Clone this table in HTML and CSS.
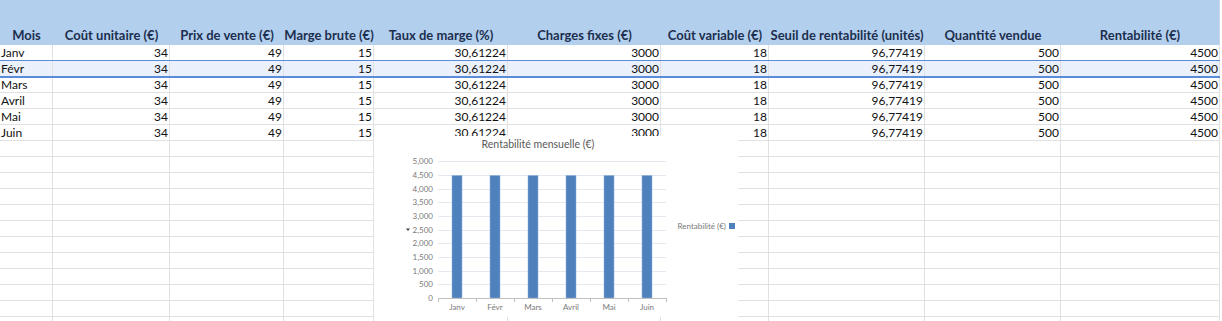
FILE: index.html
```html
<!DOCTYPE html>
<html lang="fr">
<head>
<meta charset="utf-8">
<title>Rentabilité</title>
<link rel="stylesheet" href="styles.css">
</head>
<body>
<div class="sheet">
  <div class="row head">
    <div class="c">Mois</div><div class="c">Coût unitaire (€)</div><div class="c">Prix de vente (€)</div><div class="c">Marge brute (€)</div><div class="c">Taux de marge (%)</div><div class="c">Charges fixes (€)</div><div class="c">Coût variable (€)</div><div class="c">Seuil de rentabilité (unités)</div><div class="c">Quantité vendue</div><div class="c">Rentabilité (€)</div>
  </div>
  <div class="row"><div class="c l">Janv</div><div class="c">34</div><div class="c">49</div><div class="c">15</div><div class="c">30,61224</div><div class="c">3000</div><div class="c">18</div><div class="c">96,77419</div><div class="c">500</div><div class="c">4500</div></div>
  <div class="row sel"><div class="c l">Févr</div><div class="c">34</div><div class="c">49</div><div class="c">15</div><div class="c">30,61224</div><div class="c">3000</div><div class="c">18</div><div class="c">96,77419</div><div class="c">500</div><div class="c">4500</div></div>
  <div class="row"><div class="c l">Mars</div><div class="c">34</div><div class="c">49</div><div class="c">15</div><div class="c">30,61224</div><div class="c">3000</div><div class="c">18</div><div class="c">96,77419</div><div class="c">500</div><div class="c">4500</div></div>
  <div class="row"><div class="c l">Avril</div><div class="c">34</div><div class="c">49</div><div class="c">15</div><div class="c">30,61224</div><div class="c">3000</div><div class="c">18</div><div class="c">96,77419</div><div class="c">500</div><div class="c">4500</div></div>
  <div class="row"><div class="c l">Mai</div><div class="c">34</div><div class="c">49</div><div class="c">15</div><div class="c">30,61224</div><div class="c">3000</div><div class="c">18</div><div class="c">96,77419</div><div class="c">500</div><div class="c">4500</div></div>
  <div class="row"><div class="c l">Juin</div><div class="c">34</div><div class="c">49</div><div class="c">15</div><div class="c">30,61224</div><div class="c">3000</div><div class="c">18</div><div class="c">96,77419</div><div class="c">500</div><div class="c">4500</div></div>
  <div class="row"><div class="c"></div><div class="c"></div><div class="c"></div><div class="c"></div><div class="c"></div><div class="c"></div><div class="c"></div><div class="c"></div><div class="c"></div><div class="c"></div></div>
  <div class="row"><div class="c"></div><div class="c"></div><div class="c"></div><div class="c"></div><div class="c"></div><div class="c"></div><div class="c"></div><div class="c"></div><div class="c"></div><div class="c"></div></div>
  <div class="row"><div class="c"></div><div class="c"></div><div class="c"></div><div class="c"></div><div class="c"></div><div class="c"></div><div class="c"></div><div class="c"></div><div class="c"></div><div class="c"></div></div>
  <div class="row"><div class="c"></div><div class="c"></div><div class="c"></div><div class="c"></div><div class="c"></div><div class="c"></div><div class="c"></div><div class="c"></div><div class="c"></div><div class="c"></div></div>
  <div class="row"><div class="c"></div><div class="c"></div><div class="c"></div><div class="c"></div><div class="c"></div><div class="c"></div><div class="c"></div><div class="c"></div><div class="c"></div><div class="c"></div></div>
  <div class="row"><div class="c"></div><div class="c"></div><div class="c"></div><div class="c"></div><div class="c"></div><div class="c"></div><div class="c"></div><div class="c"></div><div class="c"></div><div class="c"></div></div>
  <div class="row"><div class="c"></div><div class="c"></div><div class="c"></div><div class="c"></div><div class="c"></div><div class="c"></div><div class="c"></div><div class="c"></div><div class="c"></div><div class="c"></div></div>
  <div class="row"><div class="c"></div><div class="c"></div><div class="c"></div><div class="c"></div><div class="c"></div><div class="c"></div><div class="c"></div><div class="c"></div><div class="c"></div><div class="c"></div></div>
  <div class="row"><div class="c"></div><div class="c"></div><div class="c"></div><div class="c"></div><div class="c"></div><div class="c"></div><div class="c"></div><div class="c"></div><div class="c"></div><div class="c"></div></div>
  <div class="row"><div class="c"></div><div class="c"></div><div class="c"></div><div class="c"></div><div class="c"></div><div class="c"></div><div class="c"></div><div class="c"></div><div class="c"></div><div class="c"></div></div>
  <div class="row"><div class="c"></div><div class="c"></div><div class="c"></div><div class="c"></div><div class="c"></div><div class="c"></div><div class="c"></div><div class="c"></div><div class="c"></div><div class="c"></div></div>
  <div class="row"><div class="c"></div><div class="c"></div><div class="c"></div><div class="c"></div><div class="c"></div><div class="c"></div><div class="c"></div><div class="c"></div><div class="c"></div><div class="c"></div></div>

  <div class="chart">
    <svg width="364" height="181" viewBox="0 0 364 181">
      <text class="title" x="164" y="12" text-anchor="middle">Rentabilité mensuelle (€)</text>
      <g class="grid">
        <line x1="64" x2="292" y1="25.5" y2="25.5"/>
        <line x1="64" x2="292" y1="39.5" y2="39.5"/>
        <line x1="64" x2="292" y1="53.5" y2="53.5"/>
        <line x1="64" x2="292" y1="66.5" y2="66.5"/>
        <line x1="64" x2="292" y1="80.5" y2="80.5"/>
        <line x1="64" x2="292" y1="94.5" y2="94.5"/>
        <line x1="64" x2="292" y1="107.5" y2="107.5"/>
        <line x1="64" x2="292" y1="121.5" y2="121.5"/>
        <line x1="64" x2="292" y1="135.5" y2="135.5"/>
        <line x1="64" x2="292" y1="148.5" y2="148.5"/>
      </g>
      <g class="ylab" text-anchor="end">
        <text x="59" y="28">5,000</text>
        <text x="59" y="42">4,500</text>
        <text x="59" y="56">4,000</text>
        <text x="59" y="69">3,500</text>
        <text x="59" y="83">3,000</text>
        <text x="59" y="97">2,500</text>
        <text x="59" y="110">2,000</text>
        <text x="59" y="124">1,500</text>
        <text x="59" y="138">1,000</text>
        <text x="59" y="151">500</text>
        <text x="59" y="165">0</text>
      </g>
      <path class="drop" d="M32 92.5 L36 92.5 L34 95 Z"/>
      <g class="bars">
        <rect x="78" y="39.5" width="10" height="122.5"/>
        <rect x="116" y="39.5" width="10" height="122.5"/>
        <rect x="154" y="39.5" width="10" height="122.5"/>
        <rect x="192" y="39.5" width="10" height="122.5"/>
        <rect x="230" y="39.5" width="10" height="122.5"/>
        <rect x="268" y="39.5" width="10" height="122.5"/>
      </g>
      <g class="axis">
        <line x1="64" x2="292.5" y1="162.5" y2="162.5"/>
        <line x1="64.5" x2="64.5" y1="162" y2="166"/>
        <line x1="102.5" x2="102.5" y1="162" y2="166"/>
        <line x1="140.5" x2="140.5" y1="162" y2="166"/>
        <line x1="178.5" x2="178.5" y1="162" y2="166"/>
        <line x1="216.5" x2="216.5" y1="162" y2="166"/>
        <line x1="254.5" x2="254.5" y1="162" y2="166"/>
        <line x1="292.5" x2="292.5" y1="162" y2="166"/>
      </g>
      <g class="xlab" text-anchor="middle">
        <text x="83" y="174">Janv</text>
        <text x="121" y="174">Févr</text>
        <text x="159" y="174">Mars</text>
        <text x="197" y="174">Avril</text>
        <text x="235" y="174">Mai</text>
        <text x="273" y="174">Juin</text>
      </g>
      <text class="legend" x="352" y="93" text-anchor="end">Rentabilité (€)</text>
      <rect class="lkey" x="355" y="87" width="6" height="6"/>
    </svg>
  </div>
</div>
</body>
</html>
```
FILE: styles.css
```css
html, body {
  margin: 0;
  padding: 0;
  background: #ffffff;
}
body {
  width: 1222px;
  height: 321px;
  overflow: hidden;
  font-family: "Lato", "Liberation Sans", sans-serif;
  font-size: 12px;
  color: #000000;
}
.sheet {
  position: relative;
  width: 1220px;
}
.row {
  display: grid;
  grid-template-columns: 53px 117px 114px 90px 134px 153px 108px 156px 136px 159px;
  height: 16px;
}
.row .c {
  box-sizing: border-box;
  height: 16px;
  line-height: 15px;
  border-right: 1px solid #e1e1e1;
  border-bottom: 1px solid #e1e1e1;
  text-align: right;
  padding-right: 1px;
  white-space: nowrap;
  overflow: visible;
  color: #111111;
}
.row .c.l {
  text-align: left;
  padding-left: 1px;
}
.row.head {
  height: 45px;
  background: #b3cfee;
}
.row.head .c {
  height: 45px;
  border: none;
  display: flex;
  align-items: flex-end;
  justify-content: center;
  padding: 0 0 2px 0;
  font-size: 13px;
  font-weight: 700;
  color: #1c2f4f;
  line-height: 15px;
}
.row.head .c:last-child {
  border-right: 1px solid #c9d6e6;
}
.row.sel {
  background: #eaf1fc;
  position: relative;
}
.row.sel::before,
.row.sel::after {
  content: "";
  position: absolute;
  left: 0;
  right: 0;
  height: 1px;
  background: #5b8cd8;
}
.row.sel::before { top: -1px; }
.row.sel::after { bottom: 0; height: 2px; bottom: -1px; }
.chart {
  position: absolute;
  left: 374px;
  top: 136px;
  width: 364px;
  height: 181px;
  background: #ffffff;
}
.chart svg {
  display: block;
  font-family: "Lato", "Liberation Sans", sans-serif;
}
.chart .title {
  font-size: 10.5px;
  fill: #595959;
}
.chart .grid line {
  stroke: #e4e8ef;
  stroke-width: 1;
}
.chart .ylab text,
.chart .xlab text {
  font-size: 8px;
  fill: #7a7a7a;
}
.chart .bars rect {
  fill: #4f81bd;
  stroke: #8fb0dc;
  stroke-width: 0.5;
}
.chart .axis line {
  stroke: #bfbfbf;
  stroke-width: 1;
}
.chart .legend {
  font-size: 8px;
  fill: #7a7a7a;
}
.chart .lkey {
  fill: #4f81bd;
}
.chart .drop {
  fill: #404040;
}
```
